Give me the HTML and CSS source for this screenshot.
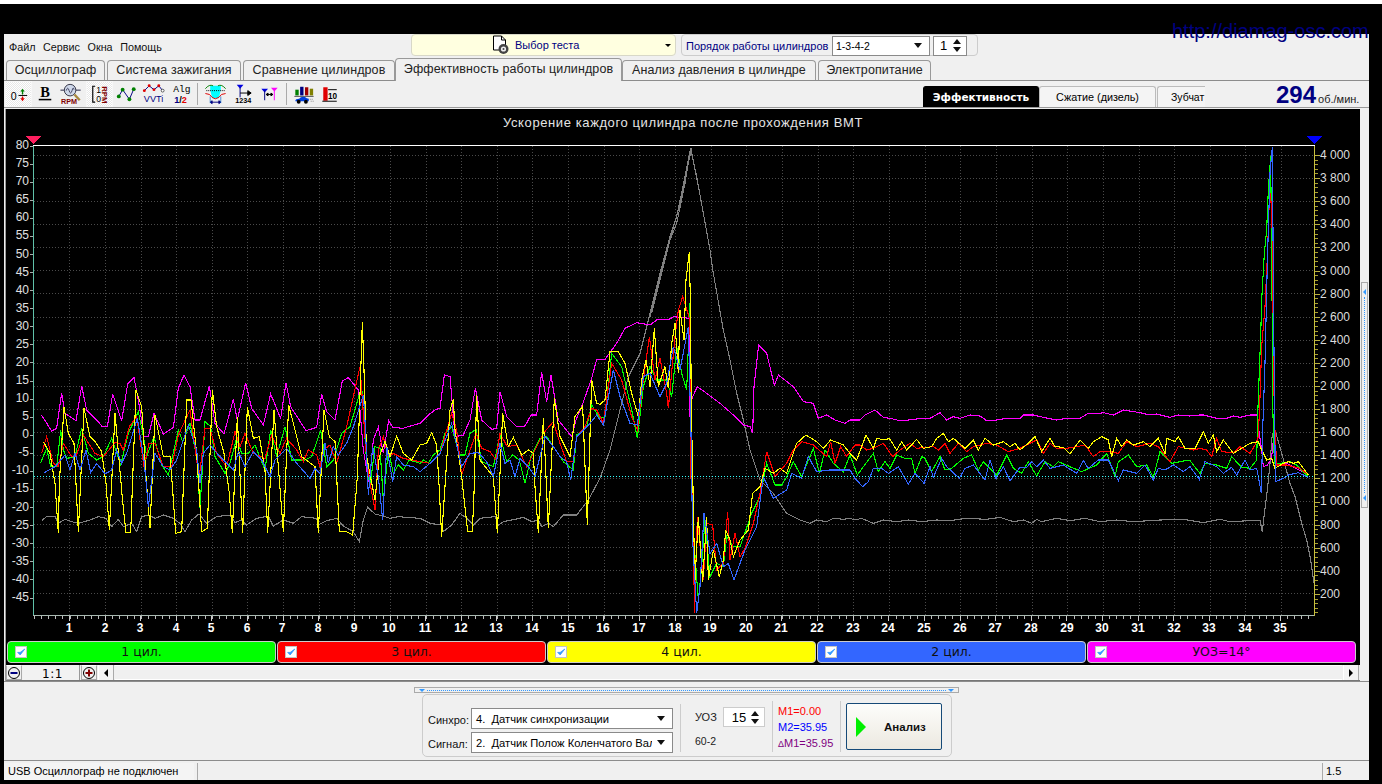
FILE: index.html
```html
<!DOCTYPE html>
<html lang="ru">
<head>
<meta charset="utf-8">
<title>Эффективность работы цилиндров</title>
<link rel="stylesheet" href="styles.css">
</head>
<body>
<div class="page-strip"></div>
<div class="site-url">http://diamag-osc.com</div>
<div class="window">
  <header class="topbar">
    <nav class="menu"><span>Файл</span><span>Сервис</span><span>Окна</span><span>Помощь</span></nav>
    <div class="test-select">
      <svg class="doc-icon" viewBox="0 0 20 20" width="21" height="20"><path d="M3 1H11L15 5V15H3Z" fill="#fff" stroke="#000"/><path d="M11 1V5H15" fill="none" stroke="#000"/><circle cx="13" cy="14" r="5" fill="#444"/><circle cx="13" cy="14" r="2.600" fill="#eee"/><circle cx="13" cy="14" r="1" fill="#444"/></svg>
      <span class="test-label">Выбор теста</span>
      <i class="caret caret-small"></i>
    </div>
    <div class="order-group">
      <span class="order-label">Порядок работы цилиндров</span>
      <div class="combo combo-order"><span>1-3-4-2</span><i class="caret"></i></div>
      <div class="spin spin-order"><span>1</span><b class="spin-arrows"><i class="up"></i><i class="down"></i></b></div>
    </div>
  </header>

  <div class="tabs">
    <div class="tab">Осциллограф</div>
    <div class="tab">Система зажигания</div>
    <div class="tab">Сравнение цилиндров</div>
    <div class="tab tab-active">Эффективность работы цилиндров</div>
    <div class="tab">Анализ давления в цилиндре</div>
    <div class="tab">Электропитание</div>
  </div>

  <div class="toolbar">
    <button class="tool pressed"><svg viewBox="0 0 27 27"><text class="ic" x="5.500" y="19.500" font-size="11">0</text><path d="M17.700 8L20 11H18.400V14H17V11H15.400Z" fill="#008000"/><rect x="13.500" y="14.500" width="9" height="1" fill="#000"/><path d="M17.700 21L15.400 18H17V16H18.400V18H20Z" fill="#e00000"/></svg></button>
    <button class="tool"><svg viewBox="0 0 27 27"><text class="ic-serif" x="13" y="17" font-size="15">B</text><rect x="6.500" y="18.500" width="13" height="1.600" fill="#000"/></svg></button>
    <button class="tool"><svg viewBox="0 0 27 27"><path d="M1 9.500H22" stroke="#224" fill="none"/><circle cx="11" cy="9.500" r="6" fill="#cfd8ea" stroke="#334"/><path d="M7 10Q8.500 5 10 10T13 10T15 9" fill="none" stroke="#224" stroke-width=".8"/><path d="M15.500 14L21 20" stroke="#a88840" stroke-width="2.500"/><text class="ic-rpm" x="1.500" y="24" font-size="7.500">RPM</text></svg></button>
    <button class="tool pressed"><svg viewBox="0 0 27 27"><path d="M9 5.500H6.500V22H9" fill="none" stroke="#000" stroke-width="1.200"/><text class="ic" x="10" y="12" font-size="9">1</text><text class="ic" x="10" y="22" font-size="9">0</text><text class="ic-rpm" transform="translate(16.500,5.500) rotate(90)" font-size="8">RPM</text></svg></button>
    <button class="tool"><svg viewBox="0 0 27 27"><path d="M5.500 16L9.500 9L16.500 19L21 8.500" fill="none" stroke="#000080"/><g fill="#008000"><circle cx="5.500" cy="16" r="2"/><circle cx="9.500" cy="9" r="2"/><circle cx="16.500" cy="19" r="2"/><circle cx="21" cy="8.500" r="2"/></g></svg></button>
    <button class="tool"><svg viewBox="0 0 27 27"><path d="M4 10L9 5L14 9L19 5L23 10" fill="none" stroke="#000080"/><g fill="#e00000"><circle cx="4" cy="10" r="1.500"/><circle cx="9" cy="5" r="1.500"/><circle cx="14" cy="9" r="1.500"/><circle cx="19" cy="5" r="1.500"/></g><circle cx="23" cy="10" r="1.500" fill="#fff" stroke="#000" stroke-width=".6"/><text class="ic-navy" x="3.500" y="22" font-size="9.500">VVTi</text></svg></button>
    <button class="tool"><svg viewBox="0 0 27 27"><text class="ic-mono" x="6" y="11.500" font-size="10">Alg</text><text class="ic-b" x="7" y="22.500" font-size="9.500" fill="#000080">1<tspan fill="#000">/</tspan><tspan fill="#e00000">2</tspan></text></svg></button>
    <span class="tool-sep"></span>
    <button class="tool"><svg viewBox="0 0 27 27"><path d="M8 5H19V9L17 18H10L8 9Z" fill="#00ffff"/><path d="M3 8Q7 3 11 5M16 5Q20 3 24 8" fill="none" stroke="#008000"/><path d="M3 13Q8 13 10 17Q13 20 17 17Q19 13 24 13" fill="none" stroke="#e00000"/><path d="M4 10H23" stroke="#000" stroke-dasharray="1 1"/><path d="M8 22H19M8 22L10 20.500V23.500ZM19 22L17 20.500V23.500Z" stroke="#000080" fill="#000080"/><path d="M8 16V23M19 16V23" stroke="#0060c0" stroke-width=".7"/></svg></button>
    <button class="tool"><svg viewBox="0 0 27 27"><path d="M7.500 4H14.500L11 8Z" fill="#0000e0"/><path d="M11 7V17" stroke="#000080"/><path d="M11 12.500H22M19 10L22.500 12.500L19 15Z" stroke="#000" fill="#000"/><text class="ic-small" x="6" y="22.500" font-size="7.500">1234</text></svg></button>
    <button class="tool"><svg viewBox="0 0 27 27"><path d="M5 8H12L8.500 12Z" fill="#0000e0"/><path d="M8.500 10V20" stroke="#000080"/><path d="M15 7H22L18.500 11Z" fill="#ff00ff"/><path d="M18.500 10V20" stroke="#ff00ff"/><path d="M10 14H17M10 14L12 12.500V15.500ZM17 14L15 12.500V15.500Z" stroke="#000" fill="#000"/></svg></button>
    <span class="tool-sep tool-sep-b"></span>
    <button class="tool"><svg viewBox="0 0 27 27"><rect x="5" y="9" width="3.500" height="6" fill="#008000"/><rect x="10" y="6" width="3.500" height="9" fill="#000080"/><rect x="15" y="6.500" width="3.500" height="8.500" fill="#a00000"/><rect x="20" y="8" width="3.500" height="7" fill="#808000"/><path d="M4 16H24" stroke="#555"/><path d="M5 21Q5 18.500 9 18.500Q11 15.500 15 16.500Q17 18 19 18.500V21Z" fill="#0040e0"/><circle cx="8.500" cy="21.500" r="2" fill="#000"/><circle cx="16" cy="21.500" r="2" fill="#000"/><path d="M20 19H24M21 21H24" stroke="#888" stroke-dasharray="1 1"/></svg></button>
    <button class="tool"><svg viewBox="0 0 27 27"><rect x="6" y="6.500" width="4.500" height="14" fill="#e00000"/><rect x="5" y="20.500" width="15" height="1" fill="#000"/><path d="M11 9H20" stroke="#000"/><text class="ic-b" x="11" y="19" font-size="8.500" fill="#000">10</text></svg></button>
    <div class="subtabs">
      <div class="subtab subtab-on">Эффективность</div>
      <div class="subtab">Сжатие (дизель)</div>
      <div class="subtab subtab-clip">Зубчат</div>
    </div>
    <div class="rpm"><strong>294</strong><span>об./мин.</span></div>
  </div>

  <main class="main">
    <div class="plot-col">
      <svg class="chart" viewBox="6 109 1354 532" width="1354" height="532">
        <text class="title" x="683" y="126.500">Ускорение каждого цилиндра после прохождения ВМТ</text>
        <path class="grid" d="M34 155.500H1314M34 178.500H1314M34 201.500H1314M34 224.500H1314M34 247.500H1314M34 270.500H1314M34 293.500H1314M34 317.500H1314M34 340.500H1314M34 363.500H1314M34 386.500H1314M34 409.500H1314M34 432.500H1314M34 455.500H1314M34 478.500H1314M34 501.500H1314M34 524.500H1314M34 547.500H1314M34 570.500H1314M34 593.500H1314"/>
        <path class="grid" d="M69.500 146V615M105.500 146V615M141.500 146V615M176.500 146V615M212.500 146V615M247.500 146V615M283.500 146V615M319.500 146V615M354.500 146V615M390.500 146V615M426.500 146V615M461.500 146V615M497.500 146V615M532.500 146V615M568.500 146V615M604.500 146V615M639.500 146V615M675.500 146V615M711.500 146V615M746.500 146V615M782.500 146V615M818.500 146V615M853.500 146V615M889.500 146V615M925.500 146V615M960.500 146V615M996.500 146V615M1032.500 146V615M1067.500 146V615M1103.500 146V615M1139.500 146V615M1174.500 146V615M1210.500 146V615M1245.500 146V615M1281.500 146V615"/>

        <!-- ticks -->
        <path class="tick-x-minor" d="M34 617H1314"/>
        <path class="tick-x-major" d="M69 618H1314"/>
        <path class="tick-left" d="M31.500 145.500V615"/>
        <path class="tick-right-minor" d="M1316 155V615"/>
        <path class="tick-right-major" d="M1317 155V615"/>

        <!-- axes -->
        <path class="axis-left" d="M33.500 145V616"/>
        <path class="axis-bottom" d="M33 615.500H1314"/>
        <path class="axis-right" d="M1314.500 145V616"/>
        <path class="axis-top" d="M33 145.500H1315"/>

        <g class="yl">
          <text x="29" y="149">80</text><text x="29" y="167">75</text><text x="29" y="185">70</text><text x="29" y="203">65</text><text x="29" y="221">60</text><text x="29" y="239">55</text><text x="29" y="258">50</text><text x="29" y="276">45</text><text x="29" y="294">40</text><text x="29" y="312">35</text><text x="29" y="330">30</text><text x="29" y="348">25</text><text x="29" y="366">20</text><text x="29" y="384">15</text><text x="29" y="402">10</text><text x="29" y="420">5</text><text x="29" y="438">0</text><text x="29" y="456">-5</text><text x="29" y="474">-10</text><text x="29" y="492">-15</text><text x="29" y="511">-20</text><text x="29" y="529">-25</text><text x="29" y="547">-30</text><text x="29" y="565">-35</text><text x="29" y="583">-40</text><text x="29" y="601">-45</text>
        </g>
        <g class="yr">
          <text x="1320" y="159">4 000</text><text x="1320" y="182">3 800</text><text x="1320" y="205">3 600</text><text x="1320" y="228">3 400</text><text x="1320" y="251">3 200</text><text x="1320" y="275">3 000</text><text x="1320" y="298">2 800</text><text x="1320" y="321">2 600</text><text x="1320" y="344">2 400</text><text x="1320" y="367">2 200</text><text x="1320" y="390">2 000</text><text x="1320" y="413">1 800</text><text x="1320" y="436">1 600</text><text x="1320" y="459">1 400</text><text x="1320" y="482">1 200</text><text x="1320" y="505">1 000</text><text x="1320" y="529">800</text><text x="1320" y="552">600</text><text x="1320" y="575">400</text><text x="1320" y="598">200</text>
        </g>
        <g class="xl">
          <text x="69" y="632">1</text><text x="105" y="632">2</text><text x="140" y="632">3</text><text x="176" y="632">4</text><text x="211" y="632">5</text><text x="247" y="632">6</text><text x="282" y="632">7</text><text x="318" y="632">8</text><text x="354" y="632">9</text><text x="389" y="632">10</text><text x="425" y="632">11</text><text x="461" y="632">12</text><text x="496" y="632">13</text><text x="532" y="632">14</text><text x="568" y="632">15</text><text x="603" y="632">16</text><text x="639" y="632">17</text><text x="675" y="632">18</text><text x="710" y="632">19</text><text x="746" y="632">20</text><text x="781" y="632">21</text><text x="817" y="632">22</text><text x="853" y="632">23</text><text x="888" y="632">24</text><text x="924" y="632">25</text><text x="960" y="632">26</text><text x="995" y="632">27</text><text x="1031" y="632">28</text><text x="1067" y="632">29</text><text x="1102" y="632">30</text><text x="1138" y="632">31</text><text x="1174" y="632">32</text><text x="1209" y="632">33</text><text x="1245" y="632">34</text><text x="1280" y="632">35</text>
        </g>

        <path class="mark-a" d="M25 136H41L33 144Z"/>
        <path class="mark-b" d="M1306 136H1322L1314 144Z"/>

        <!-- segment 1 : x 34..420 -->
        <g transform="translate(0,310) scale(.33333)">
          <polyline class="c-gray" points="125,632 140,620 165,620 175,640 195,628 215,635 235,640 270,630 295,620 318,625 335,650 355,628 370,650 395,640 410,665 425,620 445,615 465,625 490,615 520,625 540,640 555,665 575,630 597,612 620,640 650,620 690,615 705,638 725,630 740,645 770,625 805,618 820,648 850,630 880,640 905,620 950,625 955,645 980,632 1010,625 1030,648 1060,665 1078,695 1090,630 1103,592 1125,612 1150,618 1170,625 1195,620 1260,625"/>
          <polyline class="c-mag" points="125,316 155,363 170,355 185,250 195,310 228,332 245,228 260,300 290,330 307,350 322,350 338,252 365,332 383,222 402,203 415,270 432,378 445,380 462,310 490,372 520,352 535,235 552,195 570,230 585,330 600,330 628,228 645,340 672,372 700,268 712,330 737,218 755,295 790,345 812,252 842,325 858,218 872,290 918,362 950,352 965,252 980,305 1005,330 1027,213 1045,203 1075,240 1090,420 1100,480 1108,520 1120,390 1135,352 1150,430 1166,332 1178,352 1208,355 1260,340"/>
          <polyline class="c-green" points="122,458 140,415 152,470 170,470 182,360 190,420 200,445 225,440 245,355 265,430 290,450 310,440 335,385 362,465 385,370 415,305 432,390 440,440 462,380 485,465 505,495 535,360 548,395 570,340 590,440 600,595 615,335 632,350 645,440 675,490 690,460 710,385 725,430 745,430 765,405 795,480 812,360 830,440 855,350 875,450 915,450 935,440 962,360 980,470 1000,450 1025,370 1050,350 1085,230 1100,460 1110,530 1125,410 1140,415 1150,570 1165,420 1180,490 1195,465 1210,480 1228,450 1260,460"/>
          <polyline class="c-red" points="125,430 140,380 160,460 175,470 190,400 215,440 228,440 250,375 285,430 310,440 345,398 360,400 370,420 388,350 410,320 432,470 447,400 465,400 490,470 515,470 535,375 570,300 590,450 598,500 615,355 630,355 650,430 680,470 705,365 720,410 735,370 760,430 795,445 815,375 840,430 860,385 890,420 910,455 925,420 950,435 960,470 970,420 990,405 1010,460 1040,350 1080,170 1100,450 1110,520 1125,600 1135,420 1150,380 1165,440 1180,430 1210,445 1260,455"/>
          <polyline class="c-yellow" points="130,395 150,430 165,520 175,670 178,520 192,290 205,370 222,400 235,665 252,295 270,380 285,395 305,425 318,520 328,660 345,310 368,575 378,668 392,668 408,240 425,290 438,500 450,655 465,315 490,440 510,440 518,540 527,670 545,665 560,270 573,270 590,430 605,665 622,655 637,240 650,350 672,430 688,550 697,668 712,320 728,670 742,290 760,385 778,380 795,480 803,668 822,300 850,665 866,285 885,360 905,440 945,470 955,668 972,300 988,380 1005,395 1018,665 1040,665 1058,675 1072,500 1087,35 1092,180 1100,440 1125,570 1138,440 1155,395 1170,440 1190,378 1210,430 1235,450 1260,405"/>
          <polyline class="c-blue" points="133,488 165,470 195,435 210,480 225,430 240,480 258,420 272,488 290,460 315,492 335,480 350,420 365,460 380,430 412,325 432,450 445,590 465,430 490,470 510,480 530,450 565,345 590,420 600,520 610,430 630,405 660,440 700,480 715,425 735,470 760,425 785,450 810,500 825,450 860,415 890,460 930,505 945,475 960,490 975,400 985,460 1000,410 1015,435 1040,400 1060,350 1090,255 1095,330 1105,555 1118,410 1135,500 1148,630 1160,410 1178,515 1190,440 1210,465 1240,470 1260,485"/>
        </g>

        <!-- segment 2 : x 420..600 -->
        <g transform="translate(400,320) scale(.33333)">
          <polyline class="c-gray" points="60,595 90,610 125,615 130,635 155,615 180,580 200,595 220,615 240,595 285,590 295,615 310,605 345,598 370,592 395,605 415,600 425,620 445,610 460,620 490,585 530,585 565,540 600,475"/>
          <polyline class="c-mag" points="60,310 85,285 108,268 120,265 133,165 150,170 165,350 190,345 210,300 226,205 245,300 275,328 290,325 300,215 320,290 350,320 375,318 393,285 410,285 425,157 440,245 453,165 475,300 515,350 528,300 545,260 575,175 590,118 600,118"/>
          <polyline class="c-green" points="60,430 70,420 85,430 100,405 120,390 135,340 155,320 178,405 195,405 210,340 228,328 245,425 280,440 300,345 320,425 338,405 358,420 375,490 393,410 420,355 440,350 470,395 490,425 520,450 530,345 560,320 575,255 600,295"/>
          <polyline class="c-red" points="60,425 90,430 120,400 155,280 170,330 185,465 205,405 228,340 245,385 270,395 288,420 300,340 322,380 350,375 380,440 400,400 430,340 460,305 480,370 500,425 520,425 530,350 555,320 575,265 590,270 600,290"/>
          <polyline class="c-yellow" points="60,375 80,370 95,338 110,375 118,510 125,650 150,270 160,238 165,330 185,470 203,635 217,635 222,520 230,225 240,420 280,470 292,640 308,280 325,380 340,352 365,405 385,390 400,400 405,500 415,640 430,295 445,625 463,235 480,350 510,410 525,290 548,258 562,615 575,180 590,250 600,253"/>
          <polyline class="c-blue" points="60,455 90,430 120,400 155,310 185,440 210,400 235,398 260,425 280,470 300,370 315,430 330,420 345,470 360,415 385,440 405,470 435,348 460,380 480,410 500,425 512,480 530,350 570,310 590,285 600,300"/>
        </g>

        <!-- segment 3 : x 600..850 -->
        <g transform="translate(560,140) scale(.33333)">
          <polyline class="c-gray" points="120,1015 150,930 185,790 205,710 240,640 270,520 300,400 330,290 350,230 375,110 392,25 410,110 430,220 450,330 460,400 490,570 510,660 530,760 550,840 570,930 600,1020 640,1060 680,1120 720,1140 750,1150 770,1140 800,1145 820,1135 850,1138 870,1135"/>
          <polyline class="c-gray" points="270,530 300,410 330,300 350,250 375,130 392,25 420,165"/>
          <polyline class="c-gray" points="275,520 305,400 335,280 355,210 380,90 395,25"/>
          <polyline class="c-mag" points="120,658 135,658 170,610 195,565 230,548 270,555 290,540 330,537 340,530 388,535 390,830 396,775 412,740 440,760 480,790 520,825 550,855 570,860 578,880 582,740 596,615 620,640 643,735 655,705 700,740 730,785 760,790 775,835 800,825 825,840 855,850 870,840"/>
          <polyline class="c-green" points="120,835 135,830 155,640 185,680 215,810 232,895 250,740 270,680 290,720 320,720 335,770 350,620 365,700 380,750 390,490 393,1000 400,1180 415,1380 425,1280 435,1140 450,1310 470,1270 490,1280 500,1190 520,1220 540,1220 575,1120 600,1070 620,970 645,1035 665,1035 680,1010 700,965 725,1010 760,925 778,1000 795,930 820,970 850,995 870,945"/>
          <polyline class="c-red" points="120,830 130,850 155,670 185,720 215,830 232,870 250,720 268,590 285,720 300,655 320,760 325,805 345,590 355,510 368,470 390,540 392,1000 400,1120 403,1420 412,1130 430,1320 440,1150 458,1155 470,1290 490,1270 503,1115 510,1260 525,1180 540,1250 555,1225 580,1150 600,1060 620,935 645,1010 680,970 700,930 725,905 760,915 800,950 812,905 825,970 842,920 860,950 870,935"/>
          <polyline class="c-yellow" points="120,793 135,780 150,635 175,635 195,670 215,760 235,830 245,720 258,660 270,740 283,565 295,740 315,680 325,745 335,610 345,550 355,700 360,510 372,600 378,420 388,335 392,530 395,1000 397,900 400,1120 405,1320 415,1130 428,1325 440,1130 445,1320 460,1230 478,1310 490,1260 497,1170 510,1200 520,1250 540,1200 565,1170 578,1060 600,1040 615,985 640,1000 660,985 680,1000 710,910 738,885 770,905 790,925 812,900 850,915 870,940"/>
          <polyline class="c-blue" points="120,840 130,855 160,690 180,770 210,850 232,855 250,710 270,700 300,770 320,730 340,620 360,690 385,560 393,880 398,1200 410,1420 420,1340 432,1120 450,1240 470,1210 490,1280 505,1270 522,1320 540,1270 555,1230 590,1160 610,1010 640,1075 680,1050 695,1000 725,1015 745,950 770,995 810,990 850,990 870,990"/>
        </g>

        <!-- segment 4 : x 850..1250 -->
        <g transform="translate(850,390) scale(.33333)">
          <polyline class="c-gray" points="0,385 15,390 35,385 70,400 100,390 140,395 175,390 215,395 260,390 300,392 350,385 410,388 450,382 490,395 520,390 545,400 560,388 575,395 620,385 660,392 705,385 750,395 800,390 850,395 930,390 1000,388 1060,398 1110,388 1140,395 1200,392"/>
          <polyline class="c-mag" points="0,90 30,90 45,75 75,60 100,82 120,85 150,92 175,90 215,85 240,85 270,68 290,90 310,80 330,85 360,75 390,78 410,92 440,90 470,85 510,85 520,75 550,75 580,82 620,90 650,85 690,85 715,70 735,72 760,68 790,75 820,60 870,68 900,75 920,72 960,82 985,75 1020,78 1050,75 1060,75 1100,85 1130,85 1150,78 1170,82 1200,75"/>
          <polyline class="c-green" points="0,195 22,255 40,230 70,190 85,245 105,215 120,235 140,195 165,205 185,205 195,250 215,200 225,205 245,245 270,200 285,240 305,235 340,205 365,195 385,240 400,215 440,255 470,195 490,235 515,250 535,215 560,258 585,215 610,230 625,215 655,228 695,245 740,225 770,190 795,260 805,215 835,195 860,230 890,225 910,262 930,185 965,220 1005,212 1020,212 1050,250 1065,220 1100,225 1130,235 1145,200 1175,232 1200,235"/>
          <polyline class="c-red" points="0,185 15,165 30,165 50,180 70,175 100,160 128,200 150,180 180,160 200,175 250,170 265,180 285,160 300,190 325,160 350,185 370,170 390,165 410,160 440,165 475,185 510,175 560,150 580,190 600,160 620,175 650,175 680,170 705,165 730,200 750,185 780,185 805,190 830,155 860,170 900,160 925,170 960,215 985,170 1030,180 1050,175 1070,180 1085,200 1100,145 1115,185 1150,188 1170,170 1200,190"/>
          <polyline class="c-yellow" points="0,190 20,210 48,135 70,175 80,145 105,150 118,145 140,180 155,155 170,180 200,148 220,175 245,170 260,145 280,130 295,155 310,145 345,175 370,150 385,180 405,145 430,165 460,155 480,170 495,160 510,180 535,160 555,140 575,185 600,145 615,170 640,172 660,192 690,150 715,175 730,155 755,140 775,150 785,200 800,145 815,170 830,150 850,165 880,155 900,170 925,145 945,190 950,145 975,155 985,140 1005,175 1035,175 1060,125 1075,160 1090,135 1100,185 1120,150 1150,190 1200,160"/>
          <polyline class="c-blue" points="0,240 15,265 38,290 55,275 70,235 95,235 115,250 145,230 175,283 195,250 222,280 240,230 250,262 275,205 290,230 328,265 345,235 370,225 405,270 420,210 438,265 460,230 480,272 510,232 530,232 545,215 560,230 580,210 600,235 640,225 680,250 700,212 715,235 745,210 775,210 805,272 820,240 860,250 885,225 910,270 925,235 945,240 970,225 1000,245 1020,230 1048,268 1065,215 1100,230 1120,250 1145,232 1160,255 1185,210 1200,240"/>
        </g>

        <!-- segment 5 : x 1250..1314 -->
        <g transform="translate(1180,130) scale(.33333)">
          <polyline class="c-gray" points="210,1172 240,1172 247,1205 255,1135 262,1080 270,1000 277,910 288,910 305,970 330,1060 345,1100 365,1180 380,1230 392,1290 402,1360"/>
          <polyline class="c-mag" points="210,855 232,855 237,905 245,960 250,1010 262,1005 272,990 278,960 282,890 290,1005 320,1000 385,1035"/>
          <polyline class="c-green" points="210,1015 230,990 234,830 242,620 245,510 253,370 260,300 265,180 272,78 277,600 278,820 283,1000 300,1000 330,995 350,1005 385,1040"/>
          <polyline class="c-red" points="210,970 228,940 235,920 240,800 245,650 255,530 262,380 268,210 272,190 278,340 280,700 284,880 290,1005 320,1005 360,1015 385,1035"/>
          <polyline class="c-yellow" points="210,940 235,935 245,960 260,990 275,985 285,1015 310,1000 325,995 340,1000 355,995 385,1035"/>
          <polyline class="c-blue" points="210,1020 230,1015 235,1040 244,1090 248,900 255,700 262,400 270,130 277,50 281,560 286,1055 310,1045 325,1035 355,1028 385,1042"/>
        </g>

        <path class="level" d="M34 476.500H1314"/>
      </svg>

      <div class="legend">
        <div class="legend-btn lg-green"><span class="check"><svg viewBox="0 0 12 12"><path d="M2 6.500L5 9.500L10.500 2.500L5 6.500Z"/></svg></span>1 цил.</div>
        <div class="legend-btn lg-red"><span class="check"><svg viewBox="0 0 12 12"><path d="M2 6.500L5 9.500L10.500 2.500L5 6.500Z"/></svg></span>3 цил.</div>
        <div class="legend-btn lg-yellow"><span class="check"><svg viewBox="0 0 12 12"><path d="M2 6.500L5 9.500L10.500 2.500L5 6.500Z"/></svg></span>4 цил.</div>
        <div class="legend-btn lg-blue"><span class="check"><svg viewBox="0 0 12 12"><path d="M2 6.500L5 9.500L10.500 2.500L5 6.500Z"/></svg></span>2 цил.</div>
        <div class="legend-btn lg-mag"><span class="check"><svg viewBox="0 0 12 12"><path d="M2 6.500L5 9.500L10.500 2.500L5 6.500Z"/></svg></span>УОЗ=14°</div>
      </div>

      <div class="scrollrow">
        <div class="zoom-btn"><svg viewBox="0 0 14 14" width="14" height="14"><circle cx="7" cy="7" r="5.500" fill="#f0f0f0" stroke="#000"/><rect x="3.500" y="6" width="7" height="2" fill="#000080"/></svg></div>
        <div class="scale">1:1</div>
        <div class="zoom-btn"><svg viewBox="0 0 14 14" width="14" height="14"><circle cx="7" cy="7" r="5.500" fill="#f0f0f0" stroke="#000"/><path d="M3.500 7H10.500M7 3.500V10.500" stroke="#800000" stroke-width="2"/></svg></div>
        <div class="arrow-btn"><i class="tri-left"></i></div>
        <div class="track"></div>
        <div class="arrow-btn"><i class="tri-right"></i></div>
      </div>
    </div>
    <aside class="vsplit">
      <div class="vhandle"><i class="dot-left"></i><span class="vline"></span><i class="dot-left"></i></div>
    </aside>
  </main>

  <section class="panel">
    <div class="hsplit"><i class="dot-down"></i><span class="hline"></span><i class="dot-down"></i></div>
    <div class="group">
      <div class="g-selects">
        <label class="g-label">Синхро:</label>
        <div class="combo combo-wide"><span>4.&nbsp; Датчик синхронизации</span><i class="caret"></i></div>
        <label class="g-label">Сигнал:</label>
        <div class="combo combo-wide"><span class="clip">2.&nbsp; Датчик Полож Коленчатого Вала</span><i class="caret"></i></div>
      </div>
      <div class="g-uoz">
        <div class="uoz-row"><span>УОЗ</span><div class="spin spin-uoz"><span>15</span><b class="spin-arrows"><i class="up"></i><i class="down"></i></b></div></div>
        <div class="uoz-note">60-2</div>
      </div>
      <div class="g-marks">
        <div class="m1">M1=0.00</div>
        <div class="m2">M2=35.95</div>
        <div class="m3"><small>Δ</small>M1=35.95</div>
      </div>
      <div class="g-action">
        <button class="run"><i class="run-tri"></i><span>Анализ</span></button>
      </div>
    </div>
  </section>

  <footer class="status">
    <div class="st st-a">USB Осциллограф не подключен</div>
    <div class="st st-b"></div>
    <div class="st st-c">1.5</div>
  </footer>
</div>
</body>
</html>
```
FILE: styles.css
```css
* { box-sizing: border-box; }
html, body { margin: 0; padding: 0; background: #000; }
body { width: 1382px; height: 784px; overflow: hidden; position: relative; font: 11px "Liberation Sans", Arial, sans-serif; color: #000; }

.page-strip { height: 4px; background: #fff; }
.site-url { position: absolute; left: 1172px; top: 20px; font: 20px/23px "Liberation Sans", Arial, sans-serif; color: #000080; z-index: 5; white-space: nowrap; }

.window { margin: 30px 0 0 4px; width: 1365px; height: 746px; background: #f0f0f0; display: flex; flex-direction: column; }

/* top bar */
.topbar { height: 26px; display: flex; align-items: flex-start; flex: none; }
.menu { width: 407px; display: flex; gap: 7.500px; padding: 7px 0 0 5px; font-size: 10.800px; line-height: 13px; color: #111; }
.test-select { width: 265px; height: 22px; background: #ffffe0; border: 1px solid #d8d8c8; border-radius: 4px; display: flex; align-items: center; padding-left: 78px; color: #000080; }
.doc-icon { flex: none; margin-right: 4px; }
.test-label { font-size: 11px; flex: 1; }
.order-group { margin-left: 5px; width: 297px; height: 22px; border: 1px solid #ccc; border-radius: 4px; display: flex; align-items: center; padding: 1px 0 0 4px; color: #000080; }
.order-label { width: 146px; font-size: 11px; white-space: nowrap; }
.combo { background: #fff; border: 1px solid #8a8a8a; display: flex; align-items: center; color: #000; font-size: 11px; position: relative; }
.combo span { padding-left: 3px; white-space: nowrap; }
.combo-order { width: 98px; height: 20px; padding-right: 7px; justify-content: space-between; font-size: 10.500px; }
.spin { background: #fff; border: 1px solid #8a8a8a; display: flex; align-items: center; justify-content: space-between; color: #000; }
.spin-order { width: 34px; height: 20px; margin-left: 3px; padding: 0 5px 0 6px; font-size: 13px; }
.spin-uoz { width: 42px; height: 20px; padding: 0 5px 0 8px; font-size: 13px; border-color: #ccc; }
.spin-arrows { display: flex; flex-direction: column; gap: 3px; }
.spin-arrows i { display: block; width: 0; height: 0; border-left: 4px solid transparent; border-right: 4px solid transparent; }
.spin-arrows .up { border-bottom: 5px solid #111; }
.spin-arrows .down { border-top: 5px solid #111; }
.caret { display: block; width: 0; height: 0; margin-left: auto; border-left: 4px solid transparent; border-right: 4px solid transparent; border-top: 5px solid #111; }
.caret-small { margin-right: 4px; border-width: 3px 3px 0; border-top-color: #000; flex: none; }

/* tabs */
.tabs { height: 21px; flex: none; display: grid; grid-template-columns: 99px 134px 152px 223px 194px 113px; column-gap: 2px; padding-left: 2px; border-bottom: 1px solid #8c8c8c; font: 12.500px/19px "Liberation Sans", Arial, sans-serif; letter-spacing: .1px; color: #222; }
.tab { background: #f0f0f0; border: 1px solid #999; border-bottom: 0; border-radius: 4px 4px 0 0; text-align: center; white-space: nowrap; height: 20px; }
.tab-active { margin: -2px -2px 0; height: 23px; line-height: 21px; position: relative; z-index: 1; background: #f0f0f0; border-color: #999; }

/* toolbar */
.toolbar { height: 27px; flex: none; display: flex; align-items: flex-start; padding-left: 1px; border-bottom: 1px solid #999; position: relative; }
.tool { width: 27px; height: 26px; flex: none; padding: 0; margin: 0; border: 0; background: none; display: block; }
.tool svg { width: 27px; height: 26px; display: block; }
.tool.pressed { background: repeating-conic-gradient(#fff 0 25%, #e8e8e8 0 50%) 0 0 / 2px 2px; box-shadow: inset 0 0 0 1px #f7f7f7; }
.tool-sep { width: 1px; height: 22px; margin: 2px 4px 0 3px; background: #aaa; flex: none; }
.tool-sep-b { margin: 2px 3px 0 3px; }
.ic { font-family: "Liberation Sans", sans-serif; fill: #000; }
.ic-mono { font-family: "Liberation Mono", monospace; fill: #000; }
.ic-serif { font-family: "Liberation Serif", serif; font-weight: 700; text-anchor: middle; fill: #000; }
.ic-rpm { font-family: "Liberation Sans", sans-serif; font-weight: 700; fill: #800000; }
.ic-navy { font-family: "Liberation Sans", sans-serif; fill: #000080; }
.ic-b { font-family: "Liberation Sans", sans-serif; font-weight: 700; }
.ic-small { font-family: "Liberation Sans", sans-serif; font-weight: 700; fill: #000; }
.subtabs { margin-left: 579px; margin-top: 5px; display: flex; height: 21px; }
.subtab { width: 117px; height: 21px; border: 1px solid #bbb; border-bottom: 0; border-radius: 3px 3px 0 0; background: #f4f4f4; text-align: center; font: 10.800px/21px "Liberation Sans", sans-serif; white-space: nowrap; }
.subtab-on { width: 116px; background: #000; border-color: #000; color: #fff; font: 700 10.500px/20px "DejaVu Sans", sans-serif; }
.subtab-clip { width: 48px; margin-left: 1px; padding-left: 13px; text-align: left; border-right: 0; border-radius: 3px 0 0 0; font-size: 10.500px; overflow: hidden; }
.rpm { position: absolute; left: 1272px; top: 0; height: 26px; display: flex; align-items: baseline; gap: 2px; color: #000080; }
.rpm strong { font: 700 24px/28px "Liberation Sans", sans-serif; }
.rpm span { font-size: 11px; color: #222; }

/* main */
.main { flex: none; height: 572px; margin-top: 1px; display: flex; }
.plot-col { width: 1355px; margin-left: 1px; border-left: 1px solid #999; background: #000; display: flex; flex-direction: column; }
.chart { display: block; flex: none; background: #000; shape-rendering: crispEdges; }
.chart text { shape-rendering: auto; }
.title { text-anchor: middle; fill: #e4e4e4; font: 13px "Liberation Sans", sans-serif; letter-spacing: .6px; }
.grid { fill: none; stroke: #4a4a4a; stroke-width: 1; stroke-dasharray: 1 2; }
.tick-x-minor { stroke: #bbb; stroke-width: 3; stroke-dasharray: 1 6.120; fill: none; }
.tick-x-major { stroke: #ccc; stroke-width: 5; stroke-dasharray: 1 34.620; fill: none; }
.tick-left { stroke: #aaa; stroke-width: 4; stroke-dasharray: 1 17.080; fill: none; }
.tick-right-minor { stroke: #aaa030; stroke-width: 3; stroke-dasharray: 1 3.620; fill: none; }
.tick-right-major { stroke: #bbb040; stroke-width: 6; stroke-dasharray: 1 22.100; fill: none; }
.axis-left { stroke: #5fc0a8; fill: none; }
.axis-bottom { stroke: #a8b8b0; fill: none; }
.axis-right { stroke: #c8c040; fill: none; }
.axis-top { stroke: #fff; fill: none; }
.yl text { font: 12px "Liberation Sans", sans-serif; fill: #e0e0e0; text-anchor: end; }
.yr text { font: 12px "Liberation Sans", sans-serif; fill: #dcdcdc; }
.xl text { font: 700 12px "Liberation Sans", sans-serif; fill: #fff; text-anchor: middle; }
.mark-a { fill: #ff1f5f; }
.mark-b { fill: #0000ff; }
.level { stroke: #33ffff; fill: none; stroke-dasharray: 1 2; }
polyline { fill: none; stroke-width: 1.100; vector-effect: non-scaling-stroke; }
.c-gray { stroke: #808080; }
.c-mag { stroke: #ff00ff; }
.c-green { stroke: #00ff00; }
.c-red { stroke: #ff0000; }
.c-yellow { stroke: #ffff00; }
.c-blue { stroke: #3366ff; }

.legend { height: 24px; flex: none; display: grid; grid-template-columns: repeat(5, 269px); column-gap: 1px; padding-left: 1px; align-items: start; }
.legend-btn { height: 22px; border: 1px solid #ccc; border-radius: 4px; display: flex; align-items: center; justify-content: center; position: relative; font: 12.500px/20px "DejaVu Sans", sans-serif; color: #111; }
.lg-green { background: #00ff00; }
.lg-red { background: #ff0000; }
.lg-yellow { background: #ffff00; }
.lg-blue { background: #3366ff; }
.lg-mag { background: #ff00ff; }
.check { position: absolute; left: 7px; top: 4px; width: 12px; height: 12px; background: #fff; border: 1px solid #c4c4c4; display: block; }
.check svg { display: block; width: 10px; height: 10px; fill: #3399ff; stroke: #3399ff; stroke-width: 1; }

.scrollrow { height: 16px; flex: none; background: #f0f0f0; border-bottom: 1px solid #777; display: flex; gap: 1px; padding-right: 1px; }
.zoom-btn { width: 16px; border: 1px solid #aaa; border-top-color: #fff; display: flex; align-items: center; justify-content: center; }
.scale { width: 57px; background: #f2f2f2; border-right: 1px solid #999; padding-left: 3px; text-align: center; font: 12px/18px "DejaVu Sans", sans-serif; letter-spacing: .6px; }
.arrow-btn { width: 16px; border-left: 1px solid #fff; border-right: 1px solid #aaa; display: flex; align-items: center; justify-content: center; background: #f4f4f4; }
.track { flex: 1; border-top: 1px solid #fff; border-bottom: 1px solid #fff; background: #f0f0f0; }
.tri-left { border-top: 4px solid transparent; border-bottom: 4px solid transparent; border-right: 4px solid #000; }
.tri-right { border-top: 4px solid transparent; border-bottom: 4px solid transparent; border-left: 4px solid #000; }

.vsplit { width: 9px; flex: none; background: #f0f0f0; padding: 173px 1px 0 1px; }
.vhandle { width: 7px; height: 226px; border: 1px solid #aaa; display: flex; flex-direction: column; align-items: center; padding: 6px 0; gap: 2px; background: #f0f0f0; }
.vline { flex: 1; border-left: 1px dotted #3399ff; }
.dot-left { display: block; border-top: 3px solid transparent; border-bottom: 3px solid transparent; border-right: 3px solid #3399ff; }

/* bottom panel */
.panel { height: 80px; flex: none; border-top: 1px solid #8c8c8c; border-bottom: 1px solid #8c8c8c; padding: 5px 0 0 410px; }
.hsplit { width: 545px; height: 6px; border: 1px solid #aaa; display: flex; align-items: center; padding: 0 4px; gap: 2px; }
.hline { flex: 1; border-top: 1px dotted #3399ff; }
.dot-down { display: block; border-left: 3px solid transparent; border-right: 3px solid transparent; border-top: 3px solid #3399ff; }
.group { width: 530px; height: 63px; margin: 1px 0 0 8px; border: 1px solid #ccc; border-radius: 5px; display: flex; }
.g-selects { width: 257px; padding: 13px 0 0 5px; display: grid; grid-template-columns: 43px 202px; grid-auto-rows: 21px; row-gap: 3px; align-items: center; border-right: 1px solid transparent; position: relative; }
.g-label { font-size: 11px; color: #111; padding-top: 3px; }
.combo-wide { width: 202px; height: 21px; padding-right: 7px; font-size: 11.200px; }
.combo-wide span { padding-left: 4px; }
.clip { width: 180px; overflow: hidden; }
.g-uoz { width: 92px; border-left: 1px solid #ccc; margin: 9px 0 4px; padding-left: 14px; }
.uoz-row { display: flex; align-items: center; gap: 6px; height: 20px; margin-top: 3px; font-size: 11px; color: #222; }
.uoz-note { margin-top: 8px; font-size: 10.500px; color: #222; }
.g-marks { width: 68px; border-left: 1px solid #ccc; margin: 6px 0 4px; padding: 2px 0 0 5px; font-size: 11px; line-height: 16px; white-space: nowrap; }
.m1 { color: #ff0000; }
.m2 { color: #0000ff; }
.m3 { color: #800080; }
.m3 small { font-size: 9px; }
.g-action { flex: 1; border-left: 1px solid #ccc; margin: 6px 0 4px; padding: 2px 0 0 5px; }
.run { width: 96px; height: 47px; padding: 0 0 0 9px; margin: 0; border: 1px solid #164a78; border-radius: 2px; background: linear-gradient(#fdfdfb, #ece9e0); display: flex; align-items: center; }
.run-tri { flex: none; display: block; border-top: 10px solid transparent; border-bottom: 10px solid transparent; border-left: 10px solid #00f000; }
.run span { margin-left: 18px; font: 700 11.500px "Liberation Sans", sans-serif; color: #111; }

/* status */
.status { flex: 1; display: flex; font-size: 11px; line-height: 17px; padding-top: 2px; }
.st { border-left: 1px solid #aaa; padding-left: 3px; white-space: nowrap; }
.st-a { width: 190px; border-left: 0; padding-left: 4px; background: #f4f4f4; }
.st-b { width: 1125px; margin-left: 3px; }
.st-c { flex: 1; }
```
